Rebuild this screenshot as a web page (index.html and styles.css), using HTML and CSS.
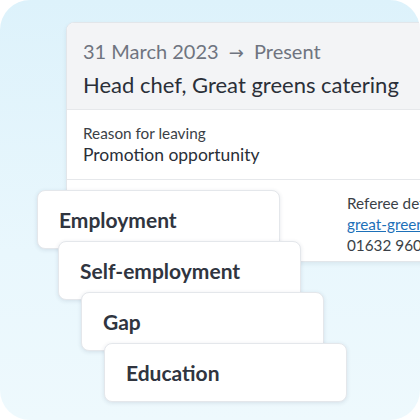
FILE: index.html
```html
<!DOCTYPE html>
<html lang="en">
<head>
<meta charset="utf-8">
<link rel="stylesheet" href="styles.css">
</head>
<body>
<div class="canvas">
  <div class="card">
    <div class="card-head">
      <div class="dates">31 March 2023 <span class="arrow">→</span> Present</div>
      <div class="title">Head chef, Great greens catering</div>
    </div>
    <div class="card-section">
      <div class="label">Reason for leaving</div>
      <div class="value">Promotion opportunity</div>
    </div>
    <div class="card-section referee-row">
      <div class="spacer"></div>
      <div class="referee">
        <div class="label">Referee details</div>
        <a class="link" href="#">great-greens@example.com</a>
        <div class="label">01632 960600</div>
      </div>
    </div>
  </div>
  <div class="stack">
    <div class="tab tab-1">Employment</div>
    <div class="tab tab-2">Self-employment</div>
    <div class="tab tab-3">Gap</div>
    <div class="tab tab-4">Education</div>
  </div>
</div>
</body>
</html>
```

FILE: styles.css
```css
html, body {
  margin: 0;
  padding: 0;
  background: #ffffff;
}
body {
  font-family: Lato, "Noto Sans", sans-serif;
}
.canvas {
  width: 420px;
  height: 420px;
  box-sizing: border-box;
  border-radius: 30px;
  overflow: hidden;
  background: linear-gradient(to bottom, #ddf2fb 0%, #e9f7fd 60%, #eef9fd 100%);
  padding: 22px 0 0 66px;
}
.card {
  width: 420px;
  background: #ffffff;
  border: 1px solid #e2e6ea;
  border-radius: 8px;
  box-shadow: 0 2px 4px rgba(30, 50, 80, 0.08);
  overflow: hidden;
}
.card-head {
  background: #f3f4f6;
  height: 87px;
  box-sizing: border-box;
  padding: 15px 16px 0;
  border-bottom: 1px solid #e6e8eb;
}
.dates {
  font-size: 20px;
  line-height: 27px;
  color: #6f7480;
}
.arrow {
  font-family: "DejaVu Sans", sans-serif;
  font-size: 18px;
  margin: 0 5px;
}
.title {
  margin-top: 5px;
  font-size: 22px;
  line-height: 28px;
  color: #2a2f38;
}
.card-section {
  box-sizing: border-box;
  padding: 13px 16px 0;
}
.card-section + .card-section {
  border-top: 1px solid #e6e8eb;
}
.card-section:nth-child(2) {
  height: 69px;
}
.label {
  font-size: 15.3px;
  line-height: 20px;
  color: #3a3f47;
}
.value {
  font-size: 17.5px;
  line-height: 24px;
  color: #2a2f38;
}
.referee-row {
  height: 82px;
  display: flex;
  padding-top: 13px;
}
.spacer {
  width: 264px;
  flex: none;
}
.referee {
  display: flex;
  flex-direction: column;
  gap: 1px;
  white-space: nowrap;
}
.link {
  font-size: 15.3px;
  line-height: 20px;
  color: #1d70b8;
  text-decoration: underline;
}
.stack {
  margin: -72px 0 0 -29px;
  display: flex;
  flex-direction: column;
}
.tab {
  width: 243px;
  height: 59px;
  box-sizing: border-box;
  background: #ffffff;
  border: 1px solid #e4e7eb;
  border-radius: 8px;
  box-shadow: 0 1px 4px rgba(30, 50, 80, 0.12);
  display: flex;
  align-items: center;
  padding: 0 21px;
  font-size: 21px;
  font-weight: 700;
  color: #30353f;
}
.tab + .tab {
  margin-top: -8px;
}
.tab-2 { margin-left: 21px; }
.tab-3 { margin-left: 44px; }
.tab-4 { margin-left: 67px; }
```
